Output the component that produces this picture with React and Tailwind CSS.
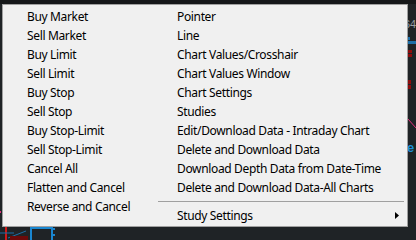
import React from 'react';

const leftItems = [
  'Buy Market',
  'Sell Market',
  'Buy Limit',
  'Sell Limit',
  'Buy Stop',
  'Sell Stop',
  'Buy Stop-Limit',
  'Sell Stop-Limit',
  'Cancel All',
  'Flatten and Cancel',
  'Reverse and Cancel',
];

const rightItems = [
  'Pointer',
  'Line',
  'Chart Values/Crosshair',
  'Chart Values Window',
  'Chart Settings',
  'Studies',
  'Edit/Download Data - Intraday Chart',
  'Delete and Download Data',
  'Download Depth Data from Date-Time',
  'Delete and Download Data-All Charts',
];

const MenuRow = ({ label, children }) => (
  <div className="h-[19px] flex items-center pl-[24px] pr-[8px] leading-none whitespace-nowrap">
    <span className="flex-1 tracking-[-0.35px]">{label}</span>
    {children}
  </div>
);

// chart bits peeking out around the context menu
const ChartBackdrop = () => (
  <svg className="absolute inset-0" width="416" height="240" viewBox="0 0 416 240">
    <rect x="0" y="0" width="416" height="4" fill="#151719" />
    <text x="404" y="28" fill="#9a9ea3" fontSize="11" fontFamily="Liberation Sans, sans-serif">64</text>
    <rect x="407" y="37" width="3" height="3" fill="#1d6fa8" />
    <rect x="407" y="41" width="9" height="3" fill="#1d6fa8" />
    <rect x="408" y="50" width="4" height="3" fill="#8e0c0c" />
    <rect x="408" y="54" width="4" height="3" fill="#8e0c0c" />
    <rect x="408" y="80" width="3" height="4" fill="#8e0c0c" />
    <rect x="408" y="85" width="3" height="4" fill="#8e0c0c" />
    <line x1="408" y1="119" x2="416" y2="128" stroke="#e0307a" strokeWidth="1" />
    <text x="407" y="152" fill="#1f8fd6" fontSize="13" fontWeight="bold" fontFamily="Liberation Sans, sans-serif">e</text>
    <rect x="0" y="211" width="1" height="2" fill="#e0307a" />
    <line x1="6" y1="226" x2="6" y2="240" stroke="#d01818" strokeWidth="2" />
    <line x1="0" y1="233" x2="14" y2="233" stroke="#1d6fa8" strokeWidth="1" />
    <line x1="8" y1="238" x2="26" y2="231" stroke="#1d6fa8" strokeWidth="1" />
    <rect x="10" y="236" width="18" height="4" fill="#6a0a0a" />
    <rect x="31" y="228" width="21" height="14" fill="none" stroke="#1a86d0" strokeWidth="2" />
    <rect x="53" y="228" width="2" height="2" fill="#1a86d0" />
    <rect x="53" y="234" width="2" height="2" fill="#1a86d0" />
  </svg>
);

export default function App() {
  return (
    <div
      className="relative w-[416px] h-[240px] overflow-hidden bg-[#1f2326]"
      style={{ fontFamily: '"Noto Sans", "Liberation Sans", sans-serif' }}
    >
      <ChartBackdrop />

      {/* context menu */}
      <div className="absolute left-[2px] top-[4px] w-[406px] border border-[#a0a0a0] bg-[#f0f0f0] pt-[2px] pb-[1px] text-[12px] text-black">
        <div className="grid grid-cols-[150px_1fr]">
          <div>
            {leftItems.map((label) => (
              <MenuRow key={label} label={label} />
            ))}
          </div>
          <div>
            {rightItems.map((label) => (
              <MenuRow key={label} label={label} />
            ))}
            <div className="h-[9px] flex items-center pl-[5px] pr-[3px]">
              <div className="w-full h-px bg-[#a0a0a0]" />
            </div>
            <MenuRow label="Study Settings">
              <svg width="4" height="7" viewBox="0 0 4 7">
                <path d="M0 0 L4 3.5 L0 7 Z" fill="#000" />
              </svg>
            </MenuRow>
          </div>
        </div>
      </div>
    </div>
  );
}
